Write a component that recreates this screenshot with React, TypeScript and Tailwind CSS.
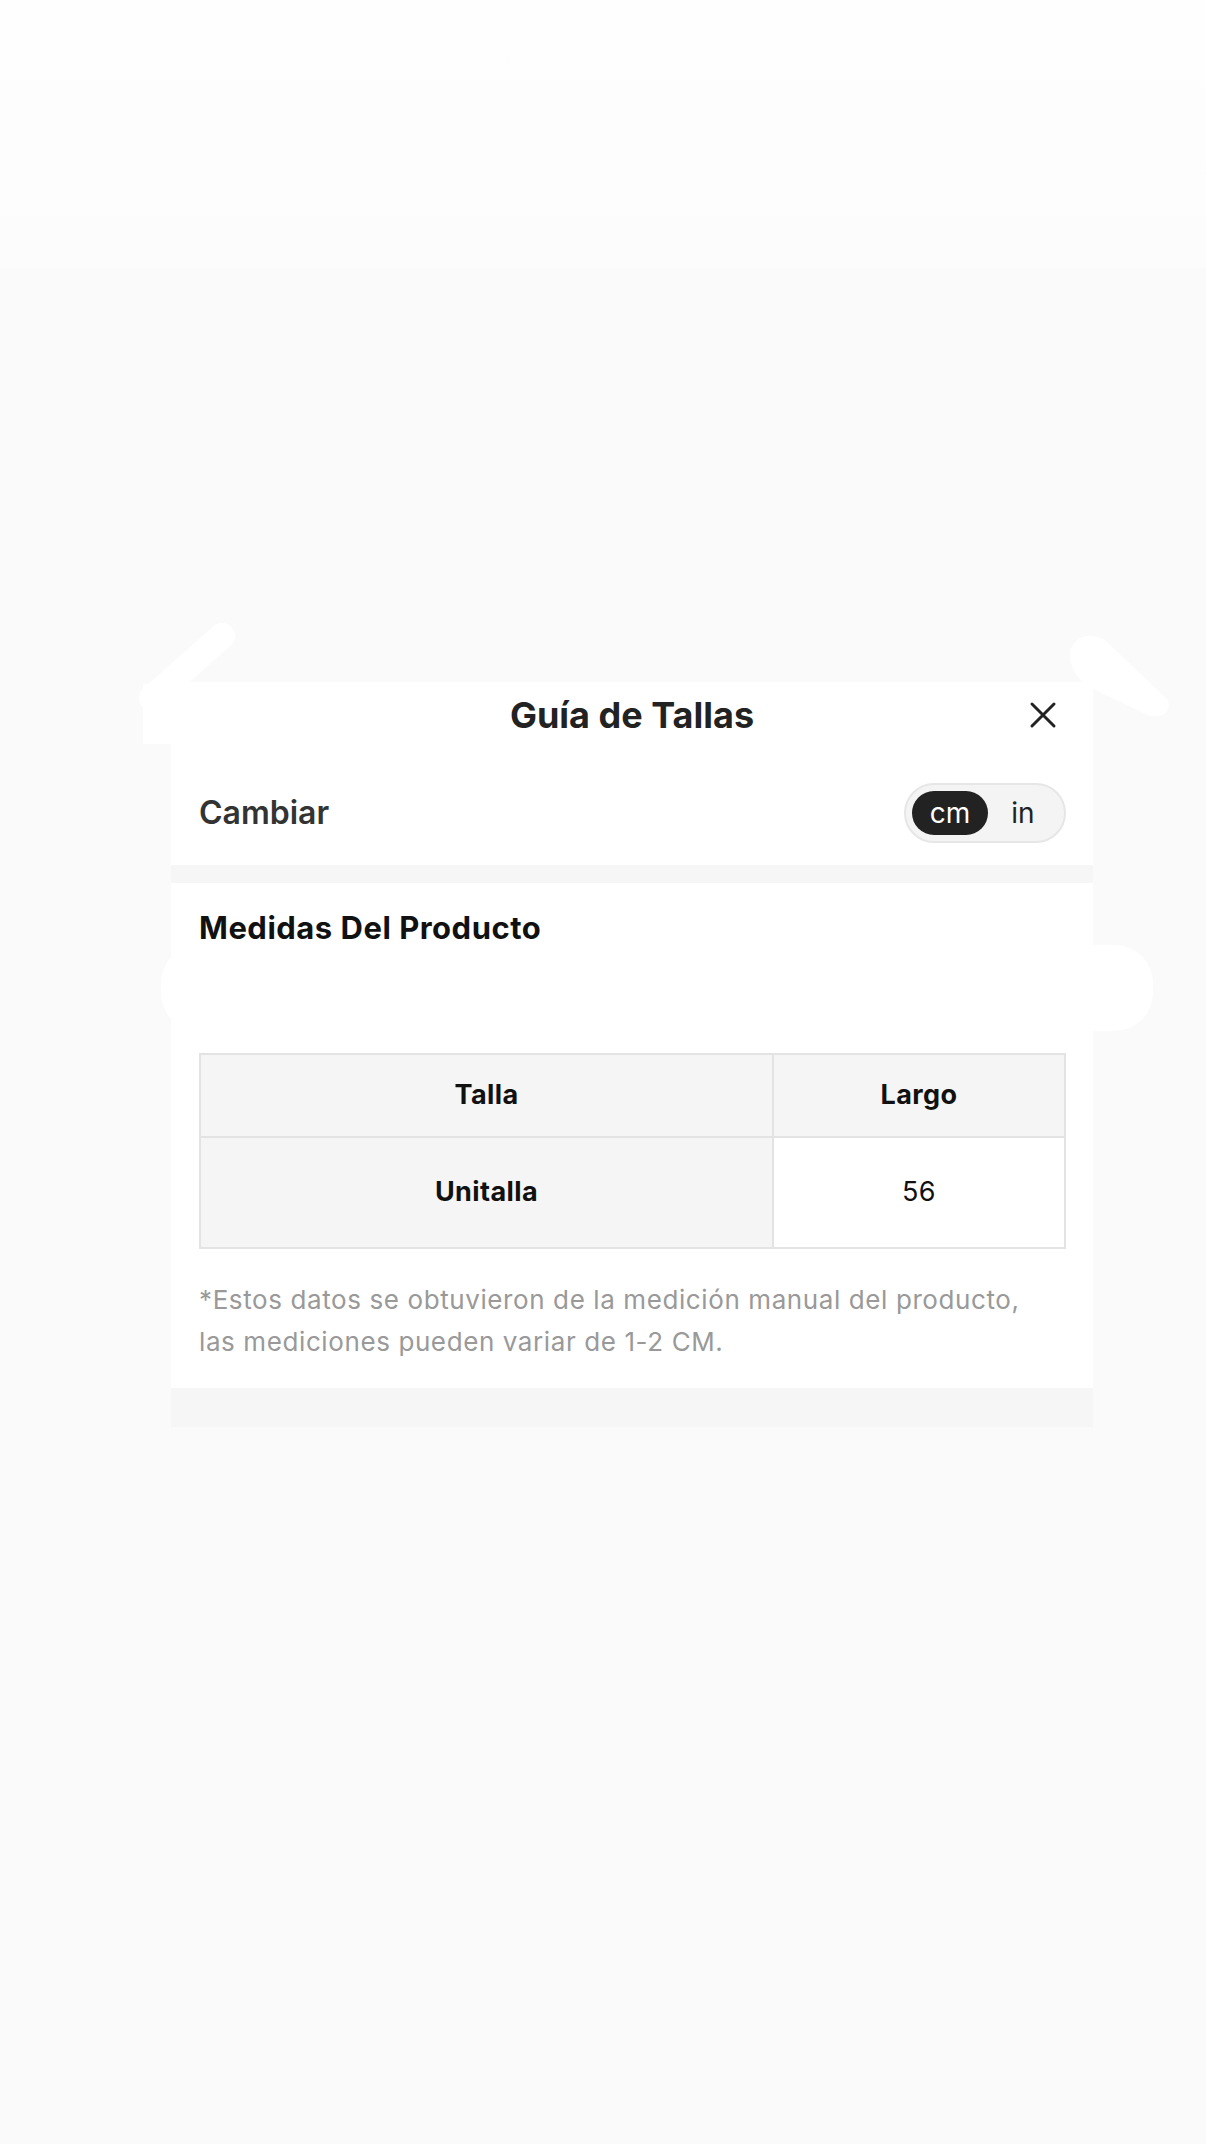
import React, { useState } from 'react';

const font = { fontFamily: 'Inter, "Noto Sans", sans-serif' };

const App: React.FC = () => {
  const [unit, setUnit] = useState<'cm' | 'in'>('cm');

  return (
    <div className="relative min-h-[2144px] w-full bg-[#fafafa] overflow-hidden" style={font}>
      {/* faint backdrop: upper area is a touch lighter, garment ghost shapes */}
      <div className="h-[268px] bg-gradient-to-b from-[#fefefe] to-[#fcfcfc]" />
      <svg className="absolute left-0 top-0 pointer-events-none" width="1206" height="1200" viewBox="0 0 1206 1200">
        <line x1="152" y1="698" x2="222" y2="636" stroke="#ffffff" strokeWidth="26" strokeLinecap="round" />
        <path d="M1070 650 Q1080 628 1105 640 L1168 700 Q1172 718 1150 716 L1095 690 Q1068 676 1070 650 Z" fill="#ffffff" />
        <rect x="143" y="684" width="40" height="60" fill="#ffffff" />
        <rect x="161" y="945" width="992" height="86" rx="38" fill="#ffffff" />
      </svg>

      <div className="relative ml-[171px] mt-[414px] w-[922px]">
        {/* Header */}
        <div className="relative flex h-[66px] items-center justify-center bg-white">
          <h2 className="text-[36px] font-bold leading-none text-[#222]">Guía de Tallas</h2>
          <button className="absolute right-[36px] top-[19px] text-[#222]" aria-label="Cerrar">
            <svg width="28" height="28" viewBox="0 0 28 28" fill="none" stroke="currentColor" strokeWidth="3" strokeLinecap="round">
              <path d="M3 3 L25 25 M25 3 L3 25" />
            </svg>
          </button>
        </div>

        {/* Unit switch */}
        <div className="flex h-[117px] items-center justify-between bg-white pl-[28px] pr-[27px] pt-[12px]">
          <span className="text-[32px] font-semibold text-[#333]">Cambiar</span>
          <div className="flex h-[60px] w-[162px] items-center rounded-full border-2 border-[#e6e6e6] bg-[#f4f4f4] px-[6px]">
            <button
              onClick={() => setUnit('cm')}
              className={
                unit === 'cm'
                  ? 'flex h-[44px] w-[76px] items-center justify-center rounded-full bg-[#222] text-[28px] leading-none text-white'
                  : 'flex h-[44px] w-[76px] items-center justify-center rounded-full text-[28px] leading-none text-[#222]'
              }
            >
              cm
            </button>
            <button
              onClick={() => setUnit('in')}
              className={
                unit === 'in'
                  ? 'flex h-[44px] w-[70px] items-center justify-center rounded-full bg-[#222] text-[28px] leading-none text-white'
                  : 'flex h-[44px] w-[70px] items-center justify-center rounded-full text-[28px] leading-none text-[#222]'
              }
            >
              in
            </button>
          </div>
        </div>

        <div className="h-[18px] bg-[#f6f6f6]" />

        {/* Product measurements */}
        <div className="bg-white px-[28px] pt-[27px] pb-[25px]">
          <h3 className="text-[31px] font-bold leading-[36px] tracking-[0.5px] text-[#111]">Medidas Del Producto</h3>

          <div className="mt-[107px] w-[867px] border-2 border-[#e3e3e3]">
            <div className="grid grid-cols-[573px_1fr]">
              <div className="flex h-[83px] items-center justify-center border-r-2 border-b-2 border-[#e3e3e3] bg-[#f5f5f5] text-[27px] font-bold tracking-[0.4px] text-[#111]">
                Talla
              </div>
              <div className="flex h-[83px] items-center justify-center border-b-2 border-[#e3e3e3] bg-[#f5f5f5] text-[27px] font-bold tracking-[0.4px] text-[#111]">
                Largo
              </div>
              <div className="flex h-[109px] items-center justify-center border-r-2 border-[#e3e3e3] bg-[#f5f5f5] text-[27px] font-bold tracking-[0.4px] text-[#111]">
                Unitalla
              </div>
              <div className="flex h-[109px] items-center justify-center bg-white text-[27px] tracking-[0.4px] text-[#111]">
                {unit === 'cm' ? '56' : '22.0'}
              </div>
            </div>
          </div>

          <p className="mt-[30px] text-[26px] leading-[42px] tracking-[0.6px] text-[#999]">
            *Estos datos se obtuvieron de la medición manual del producto,
            <br />
            las mediciones pueden variar de 1-2 CM.
          </p>
        </div>

        <div className="h-[39px] bg-[#f6f6f6]" />
      </div>
    </div>
  );
};

export default App;
